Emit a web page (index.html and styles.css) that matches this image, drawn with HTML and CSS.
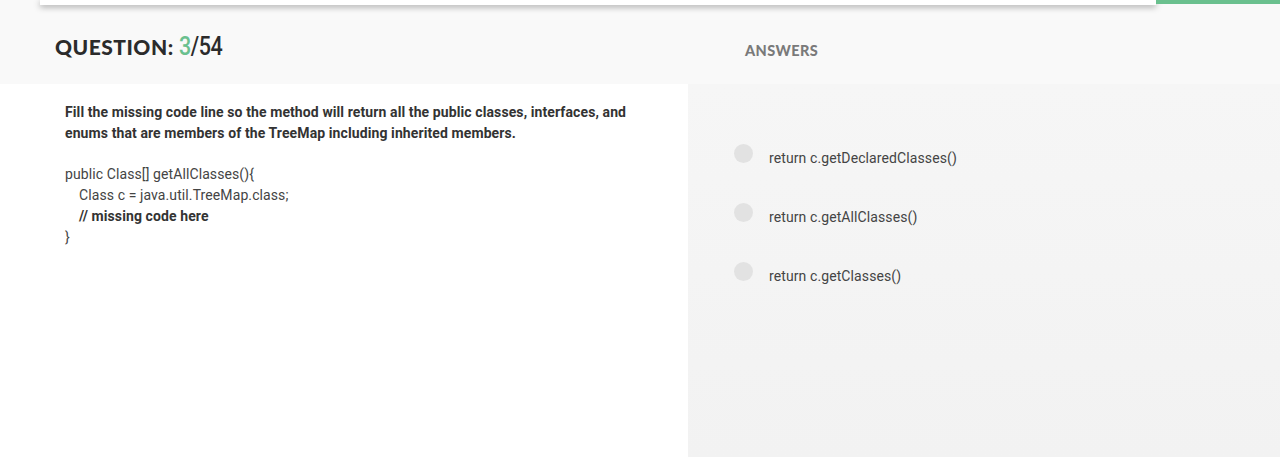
FILE: index.html
```
<!DOCTYPE html>
<html>
<head>
<meta charset="utf-8">
<link rel="stylesheet" href="styles.css">
</head>
<body>
<div class="topbar">
  <div class="topcard"></div>
  <div class="progress"></div>
</div>
<div class="header">
  <div class="qtitle">QUESTION: <span class="num"><span class="cur">3</span>/54</span></div>
  <div class="atitle">ANSWERS</div>
</div>
<div class="main">
  <div class="question">
    <p class="prompt">Fill the missing code line so the method will return all the public classes, interfaces, and enums that are members of the TreeMap including inherited members.</p>
    <div class="code">
      <div>public Class[] getAllClasses(){</div>
      <div class="ind">Class c = java.util.TreeMap.class;</div>
      <div class="ind b">// missing code here</div>
      <div>}</div>
    </div>
  </div>
  <div class="answers">
    <div class="opt"><span class="radio"></span><span class="label">return c.getDeclaredClasses()</span></div>
    <div class="opt"><span class="radio"></span><span class="label">return c.getAllClasses()</span></div>
    <div class="opt"><span class="radio"></span><span class="label">return c.getClasses()</span></div>
  </div>
</div>
</body>
</html>
```
FILE: styles.css
```
html, body {
  margin: 0;
  padding: 0;
  height: 100%;
}
body {
  background: #f9f9f9;
  font-family: Roboto, "Liberation Sans", sans-serif;
  color: #333;
  overflow: hidden;
  display: flex;
  flex-direction: column;
}
.topbar {
  display: flex;
  height: 5px;
  flex: none;
}
.topcard {
  margin-left: 40px;
  width: 1116px;
  background: #fff;
  box-shadow: 0 2px 6px rgba(0,0,0,0.35);
}
.progress {
  flex: 1;
  height: 4px;
  background: #6ac08e;
}
.header {
  display: flex;
  height: 79px;
  flex: none;
}
.qtitle {
  width: 690px;
  padding-left: 55px;
  padding-top: 29px;
  box-sizing: border-box;
  font-family: Lato, "Open Sans", sans-serif;
  font-weight: 900;
  font-size: 21px;
  color: #2b2b2b;
  letter-spacing: 0.5px;
}
.num {
  font-family: Roboto, sans-serif;
  font-weight: 500;
  font-size: 25px;
  line-height: 24px;
  letter-spacing: -0.5px;
  display: inline-block;
  transform: scaleX(0.86);
  transform-origin: left;
}
.cur { color: #6ac08e; }
.atitle {
  padding-left: 55px;
  padding-top: 37px;
  font-family: Lato, sans-serif;
  font-weight: 900;
  font-size: 14.5px;
  letter-spacing: 0.4px;
  color: #7a7a7a;
}
.main {
  flex: 1;
  display: flex;
}
.question {
  width: 688px;
  background: #fff;
  padding: 18px 50px 0 65px;
  box-sizing: border-box;
}
.prompt {
  margin: 0;
  font-weight: 700;
  font-size: 14px;
  line-height: 21px;
  color: #333;
  letter-spacing: 0.1px;
}
.code {
  margin-top: 20px;
  font-size: 14px;
  line-height: 21px;
  color: #444;
  letter-spacing: 0.1px;
  word-spacing: 0;
}
.ind { padding-left: 14px; }
.b { font-weight: 700; color: #333; }
.answers {
  flex: 1;
  background: linear-gradient(to bottom, #f6f6f6, #f2f2f2);
  padding: 60px 0 0 46px;
  display: flex;
  flex-direction: column;
  gap: 39px;
}
.opt {
  display: flex;
  align-items: flex-start;
  height: 20px;
}
.radio {
  width: 19px;
  height: 19px;
  border-radius: 50%;
  background: #e2e2e2;
  flex: none;
}
.label {
  margin-left: 16px;
  margin-top: 6px;
  font-size: 14px;
  color: #444;
  letter-spacing: 0.1px;
}
```
